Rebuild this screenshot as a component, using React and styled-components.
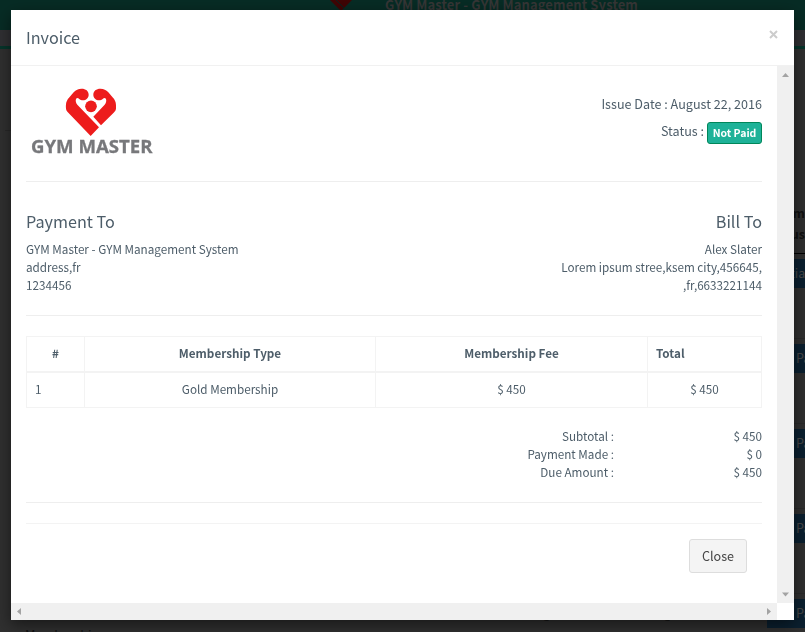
import React from 'react';
import styled, { createGlobalStyle } from 'styled-components';

const GlobalStyle = createGlobalStyle`
  * { box-sizing: border-box; }
  html, body { margin: 0; height: 100%; overflow: hidden; background: #2f2f2f; }
  body {
    font-family: "Noto Sans CJK SC", "Open Sans", sans-serif;
    font-size: 11.7px;
    line-height: 18px;
    color: #4d5d69;
  }
  h4, p { margin: 0; font-weight: 400; }
`;

/* ---------- dimmed page behind the dialog ---------- */
const Page = styled.div`
  width: 805px;
  height: 632px;
  display: flex;
  flex-direction: column;
  overflow: hidden;
  background: #303030;
`;
const TopBar = styled.div`
  flex: 0 0 30px;
  display: flex;
  background: #072c25;
  padding-left: 330px;
  gap: 33px;
  overflow: hidden;
`;
const TopTitle = styled.div`
  font-size: 13px;
  font-weight: 700;
  line-height: 18px;
  height: 20px;
  margin-top: -4px;
  letter-spacing: 0.1px;
  color: #363636;
  white-space: nowrap;
`;
const SubBar = styled.div`
  flex: 0 0 16px;
  background: #303033;
`;
const Accent = styled.div`
  flex: 0 0 3px;
  background: #06352b;
`;
const PageBody = styled.div`
  flex: 1;
  display: flex;
  justify-content: space-between;
  padding-left: 5px;
`;
const SideRule = styled.div`
  width: 400px;
  height: 82px;
  border-bottom: 1px solid #282828;
`;
const SideColumn = styled.div`
  flex: 0 0 38px;
  min-width: 0;
  padding-top: 153px;
  height: 583px;
`;
const ColumnHead = styled.div`
  height: 52px;
  border-bottom: 1px solid #000;
  color: #111;
  font-size: 12.6px;
  font-weight: 700;
  line-height: 21px;
  text-align: right;
`;
const ActionCell = styled.div`
  height: 85px;
  padding-top: 5px;
  border-bottom: 1px solid #2a2a2a;
`;
const ActionButton = styled.div`
  height: 29px;
  overflow: hidden;
  background: #0b2030;
  color: #484848;
  font-size: 12.6px;
  line-height: 27px;
  padding-left: ${(p) => p.$inset}px;
  white-space: nowrap;
`;
const LeftColumn = styled.div`
  display: flex;
  flex-direction: column;
  justify-content: space-between;
`;
const BottomRow = styled.div`
  display: flex;
  height: 22px;
  padding-left: 20px;
  color: #111;
  line-height: 18px;
`;
const BottomName = styled.div`
  width: 504px;
  padding-top: 16px;
  font-size: 12.8px;
`;
const BottomDate = styled.div`
  width: ${(p) => p.$width}px;
  margin-top: -6px;
  white-space: nowrap;
`;

/* ---------- dialog ---------- */
const Dialog = styled.div`
  position: fixed;
  left: 11px;
  top: 10px;
  width: 783px;
  height: 610px;
  display: flex;
  flex-direction: column;
  background: #fff;
  box-shadow: 0 5px 15px rgba(0, 0, 0, 0.5);
`;
const Header = styled.div`
  flex: 0 0 56px;
  height: 56px;
  display: flex;
  justify-content: space-between;
  padding: 14px 16px 14px 15px;
  border-bottom: 1px solid #f1f1f1;
`;
const Title = styled.h4`
  font-size: 16.2px;
  line-height: 26px;
`;
const DismissIcon = styled.svg`
  width: 9px;
  height: 9px;
  margin-top: 6px;
`;
const Viewport = styled.div`
  flex: 1;
  display: grid;
  grid-template-columns: 766px 17px;
  grid-template-rows: 537px 17px;
`;
const Content = styled.div`
  padding: 15px;
  overflow: hidden;
`;
const Bar = styled.div`
  display: flex;
  flex-direction: ${(p) => (p.$vertical ? 'column' : 'row')};
  justify-content: space-between;
  background: #f0f0f0;
`;
const Arrow = styled.svg`
  width: 17px;
  height: 17px;
  display: block;
`;

const Split = styled.div`
  display: flex;
  justify-content: space-between;
  height: ${(p) => p.$height}px;
  border-bottom: 1px solid #eee;
`;
const Logo = styled.svg`
  width: 130px;
  height: 76px;
`;
const Meta = styled.div`
  padding-top: 9px;
  font-size: 12.6px;
  text-align: right;
`;
const MetaLine = styled.p`
  display: flex;
  justify-content: flex-end;
  align-items: flex-start;
  gap: 3px;
  height: 32px;
  line-height: 28px;
  margin-bottom: -5px;
`;
const Badge = styled.span`
  width: 55px;
  height: 22px;
  margin-top: 5px;
  border: 1px solid #00875a;
  border-radius: 3px;
  background: #1eb298;
  color: #fff;
  font-size: 10.5px;
  font-weight: 700;
  line-height: 19px;
  text-align: center;
`;
const Party = styled.div`
  padding-top: 26px;
  text-align: ${(p) => (p.$right ? 'right' : 'left')};
`;
const PartyTitle = styled(Title)`
  margin-bottom: 6px;
`;

const Table = styled.table`
  width: 736px;
  margin-top: 20px;
  table-layout: fixed;
  border-collapse: separate;
  border-spacing: 0;
  border: 1px solid #f3f3f3;
  border-right: none;
  border-bottom: none;
`;
const Cell = styled.td`
  height: 35px;
  padding: 0 8px 2px;
  border: solid #f3f3f3;
  border-width: 0 1px 1px 0;
  text-align: ${(p) => p.$align || 'center'};
`;
const HeadCell = styled(Cell)`
  height: 36px;
  border-bottom-width: 2px;
`;

const Totals = styled.div`
  display: grid;
  grid-template-columns: 588px 148px;
  text-align: right;
  height: 95px;
  padding-top: 19px;
  align-content: start;
  border-bottom: 1px solid #eee;
`;
const Footer = styled.div`
  margin-top: 20px;
  padding: 15px;
  border-top: 1px solid #f3f3f3;
  display: flex;
  justify-content: flex-end;
`;
const CloseButton = styled.button`
  width: 58px;
  height: 34px;
  padding: 0;
  border: 1px solid #ddd;
  border-radius: 3px;
  background: #f4f4f4;
  color: #444;
  font: 12.6px/32px "Noto Sans CJK SC", "Open Sans", sans-serif;
`;

const arrows = {
  up: 'M8.5 7 L12 11 H5 Z',
  down: 'M8.5 10.5 L12 6.5 H5 Z',
  left: 'M6 8.5 L10 5 V12 Z',
  right: 'M11 8.5 L7 5 V12 Z',
};
const ScrollArrow = ({ dir }) => (
  <Arrow viewBox="0 0 17 17"><path d={arrows[dir]} fill="#a3a3a3" /></Arrow>
);

const totals = [
  ['Subtotal :', '$ 450'],
  ['Payment Made :', '$ 0'],
  ['Due Amount :', '$ 450'],
];

export default function App() {
  return (
    <>
      <GlobalStyle />
      <Page>
        <TopBar>
          <svg width="22" height="11" viewBox="0 0 22 11">
            <path d="M0 0 H22 L11 11 Z" fill="#400505" />
            <path d="M6 0 L14 8" stroke="#07241f" />
          </svg>
          <TopTitle>GYM Master - GYM Management System</TopTitle>
        </TopBar>
        <SubBar />
        <Accent />
        <PageBody>
          <LeftColumn>
            <SideRule />
            <BottomRow>
              <BottomName>Membership</BottomName>
              <BottomDate $width={121}>August 22, 2016</BottomDate>
              <BottomDate $width={100}>August 22, 2016</BottomDate>
            </BottomRow>
          </LeftColumn>
          <SideColumn>
            <ColumnHead>m<br />us</ColumnHead>
            <ActionCell><ActionButton $inset={23}>tial</ActionButton></ActionCell>
            {[0, 1, 2, 3].map((i) => (
              <ActionCell key={i}><ActionButton $inset={29}>Paid</ActionButton></ActionCell>
            ))}
          </SideColumn>
        </PageBody>
      </Page>

      <Dialog role="dialog">
        <Header>
          <Title>Invoice</Title>
          <DismissIcon viewBox="0 0 9 9">
            <path d="M1 1 L8 8 M8 1 L1 8" stroke="#ccc" strokeWidth="2" />
          </DismissIcon>
        </Header>
        <Viewport>
          <Content>
            <Split $height={101}>
              <Logo viewBox="0 0 130 76">
                <g fill="#ed1c1c" transform="translate(-6 -1) scale(0.3333)">
                  <path d="M185 26 C174 26 168 30 161 37 L147 53 C139 62 137 70 138 86 C139 92 141 94 145 98 L212 168 L237 142 L172 74 C168 70 166 62 168 57 C170 53 174 53 177 56 C188 66 206 59 206 44 C206 33 197 26 185 26 Z" />
                  <path d="M241 26 C252 26 258 30 265 37 L279 53 C287 62 289 70 288 86 C287 92 285 94 281 98 L243 136 L220 110 L254 74 C258 70 260 62 258 57 C256 53 252 53 249 56 C238 66 220 59 220 44 C220 33 229 26 241 26 Z" />
                  <circle cx="213" cy="79" r="17.5" />
                </g>
                <text
                  x="5"
                  y="72"
                  textLength="121.5"
                  lengthAdjust="spacingAndGlyphs"
                  fill="#77787b"
                  stroke="#77787b"
                  strokeWidth="0.3"
                  fontFamily="Open Sans, sans-serif"
                  fontSize="18"
                  fontWeight="700"
                >
                  GYM MASTER
                </text>
              </Logo>
              <Meta>
                <MetaLine>Issue Date : August 22, 2016</MetaLine>
                <MetaLine>Status : <Badge>Not Paid</Badge></MetaLine>
              </Meta>
            </Split>
            <Split $height={134}>
              <Party>
                <PartyTitle>Payment To</PartyTitle>
                <p>GYM Master - GYM Management System</p>
                <p>address,fr</p>
                <p>1234456</p>
              </Party>
              <Party $right>
                <PartyTitle>Bill To</PartyTitle>
                <p>Alex Slater</p>
                <p>Lorem ipsum stree,ksem city,456645,</p>
                <p>,fr,6633221144</p>
              </Party>
            </Split>
            <Table>
              <colgroup>
                <col width="58" />
                <col width="291" />
                <col width="272" />
                <col width="114" />
              </colgroup>
              <tbody>
                <tr>
                  <HeadCell as="th">#</HeadCell>
                  <HeadCell as="th">Membership Type</HeadCell>
                  <HeadCell as="th">Membership Fee</HeadCell>
                  <HeadCell as="th" $align="left">Total</HeadCell>
                </tr>
                <tr>
                  <Cell $align="left">1</Cell>
                  <Cell>Gold Membership</Cell>
                  <Cell>$ 450</Cell>
                  <Cell>$ 450</Cell>
                </tr>
              </tbody>
            </Table>
            <Totals>
              {totals.map(([label, value]) => (
                <React.Fragment key={label}>
                  <span>{label}</span>
                  <span>{value}</span>
                </React.Fragment>
              ))}
            </Totals>
            <Footer>
              <CloseButton>Close</CloseButton>
            </Footer>
          </Content>
          <Bar $vertical>
            <ScrollArrow dir="up" />
            <ScrollArrow dir="down" />
          </Bar>
          <Bar>
            <ScrollArrow dir="left" />
            <ScrollArrow dir="right" />
          </Bar>
        </Viewport>
      </Dialog>
    </>
  );
}
